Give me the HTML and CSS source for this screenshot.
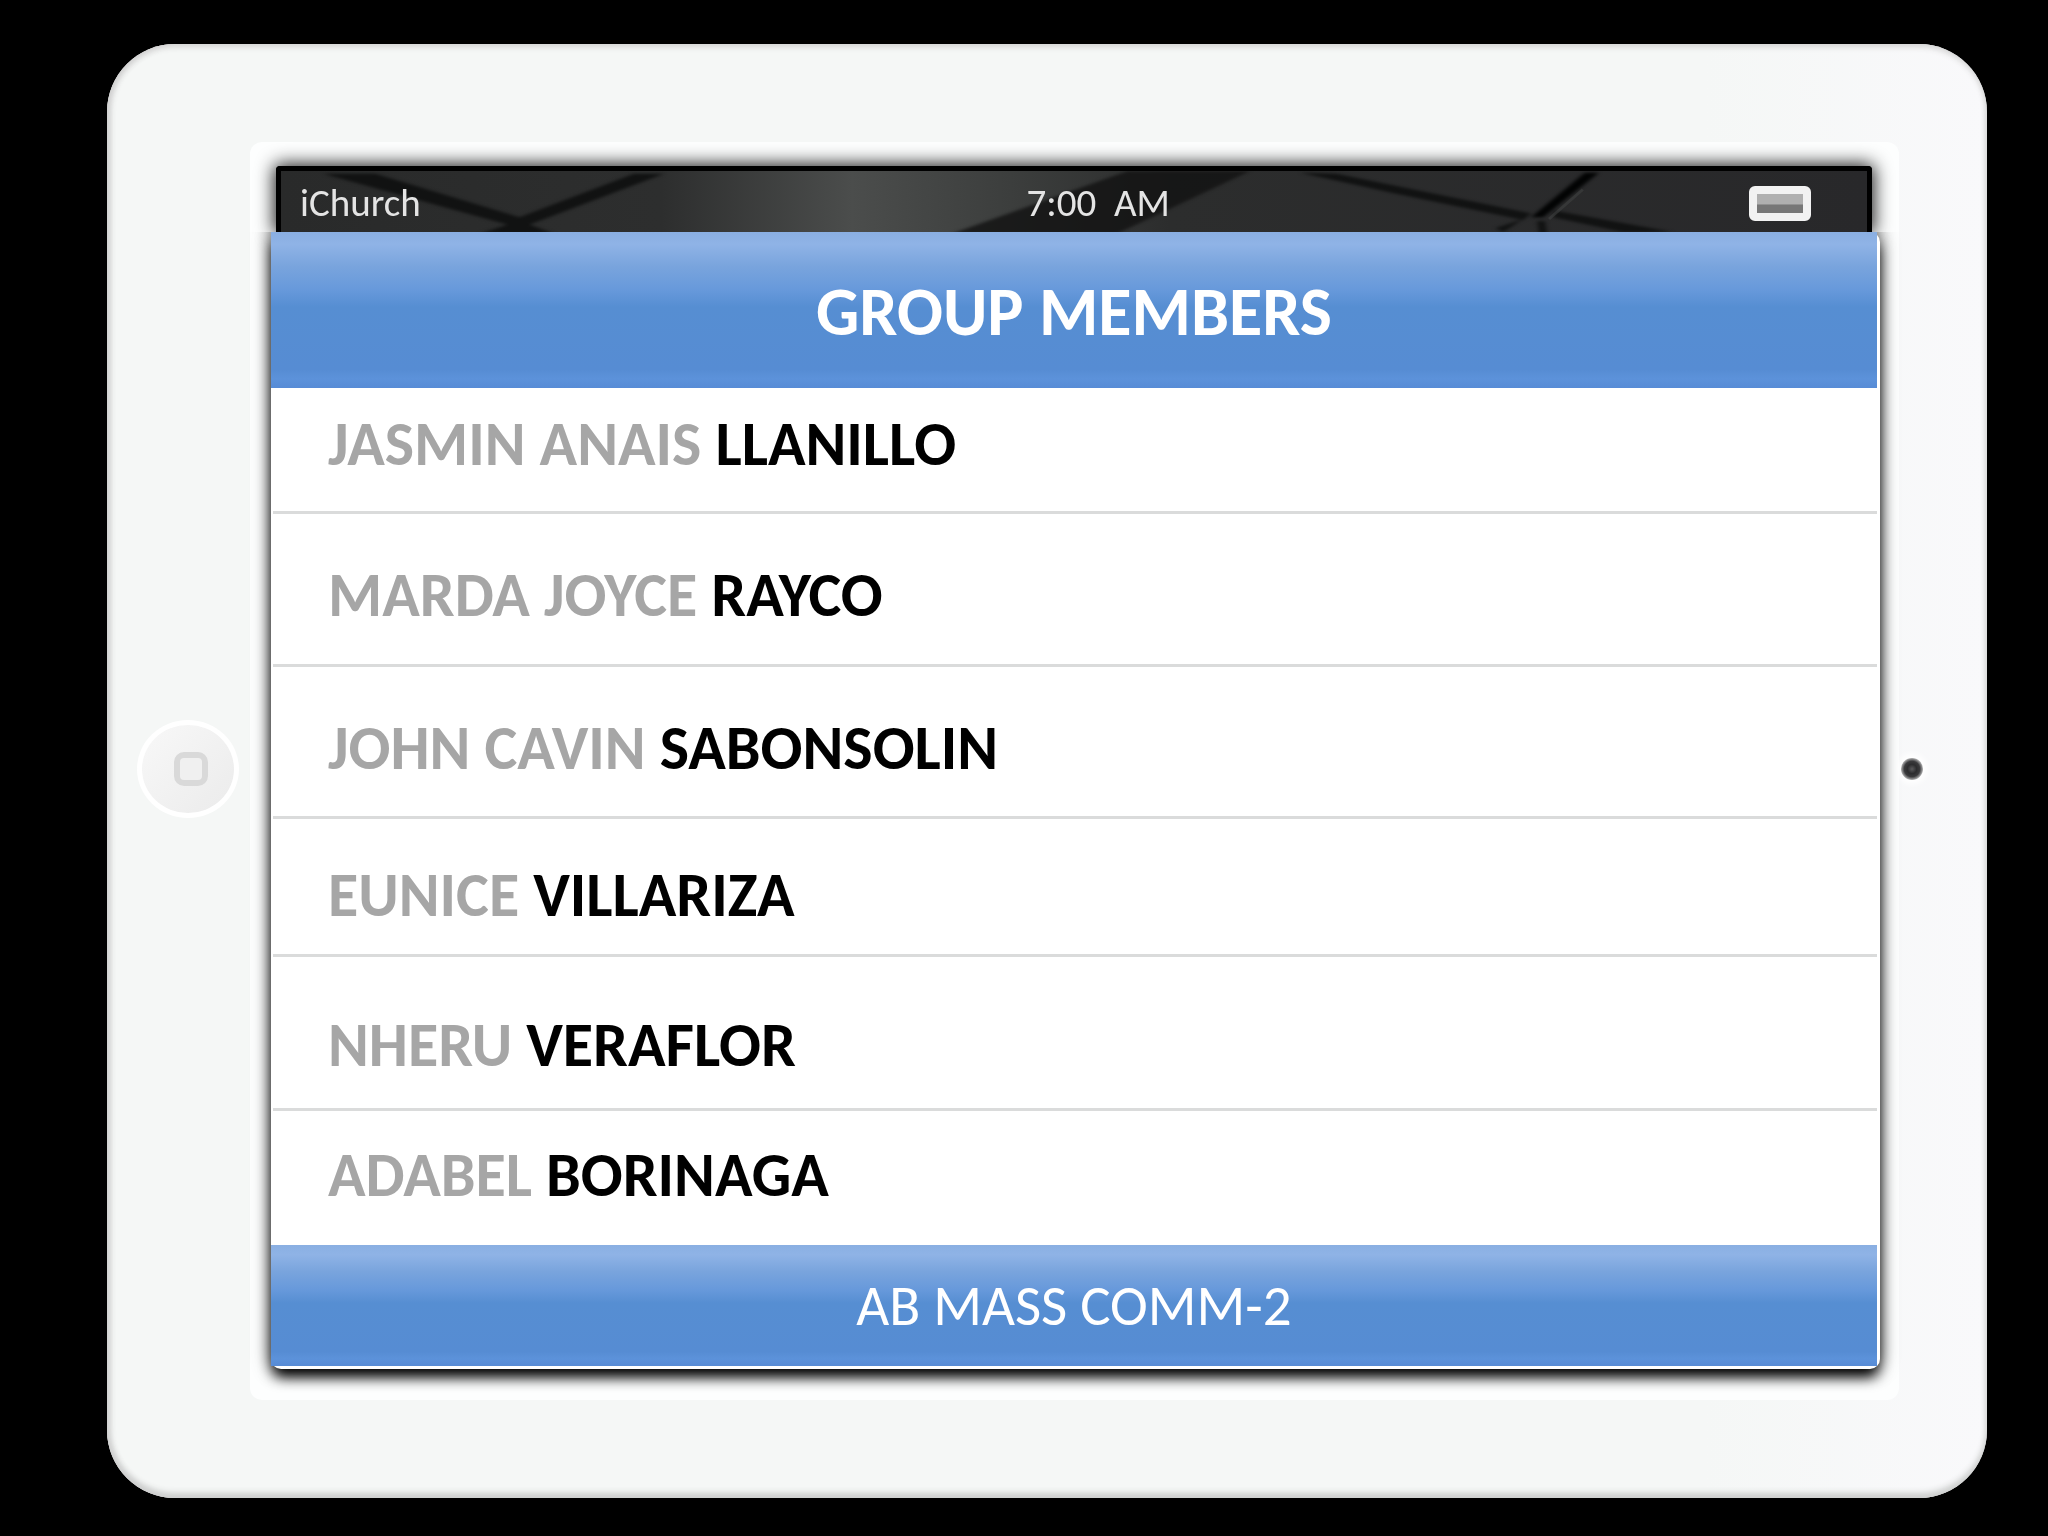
FILE: index.html
```html
<!DOCTYPE html>
<html lang="en">
  <head>
    <meta charset="UTF-8" />
    <title>iChurch - Group Members</title>
    <meta name="viewport" content="width=device-width, initial-scale=1.0" />
    <link rel="stylesheet" href="styles.css">
  </head>

  <body>
    <div class="tablet">
      <div class="side home-side">
        <button class="home-btn" aria-label="Home">
          <svg width="36" height="36" viewBox="0 0 36 36">
            <rect x="4" y="4" width="28" height="28" rx="7" fill="#f0f0f0" stroke="#d9d9d9" stroke-width="6" />
          </svg>
        </button>
      </div>

      <div class="well">
        <div class="status-bar">
          <!-- cracked glass wallpaper behind the status text -->
          <svg class="wallpaper" viewBox="0 0 1596 66" preserveAspectRatio="none" aria-hidden="true">
            <defs>
              <linearGradient id="shine" x1="0" x2="1" y1="0" y2="0">
                <stop offset="0" stop-color="#292a2a" />
                <stop offset="0.24" stop-color="#2d2e2e" />
                <stop offset="0.36" stop-color="#4b4d4c" />
                <stop offset="0.46" stop-color="#3c3e3d" />
                <stop offset="0.56" stop-color="#2c2d2d" />
                <stop offset="1" stop-color="#28282a" />
              </linearGradient>
              <filter id="soft" color-interpolation-filters="sRGB"><feGaussianBlur stdDeviation="2" /></filter>
            </defs>
            <rect width="1596" height="66" fill="url(#shine)" />
            <g filter="url(#soft)" fill="#111212">
              <path d="M43 3 L95 3 L240 50 L355 3 L385 3 L250 58 L275 68 L200 68 L228 58 Z" />
              <path d="M852 0 L975 0 L841 68 L675 68 Z" opacity="0.8" />
              <path d="M1026 2 L1062 3 L1258 46 L1250 53 L1120 24 Z" />
              <path d="M1312 2 L1326 2 L1270 50 L1258 50 Z" fill="#020303" />
              <path d="M1282 43 L1400 66 L1350 66 L1280 50 Z" />
              <path d="M1264 54 L1272 54 L1274 68 L1266 68 Z M1250 52 L1230 66 L1222 62 Z" />
            </g>
            <path d="M1276 52 L1310 20" stroke="#454746" stroke-width="3" opacity="0.5" />
          </svg>
          <span>iChurch</span>
          <span class="time">7:00&nbsp; AM</span>
          <span class="battery"></span>
        </div>

        <div class="app">
          <header>
            <h1>GROUP MEMBERS</h1>
          </header>

          <ul class="members">
            <li><span>JASMIN ANAIS</span> LLANILLO</li>
            <li><span>MARDA JOYCE</span> RAYCO</li>
            <li><span>JOHN CAVIN</span> SABONSOLIN</li>
            <li><span>EUNICE</span> VILLARIZA</li>
            <li><span>NHERU</span> VERAFLOR</li>
            <li><span>ADABEL</span> BORINAGA</li>
          </ul>

          <footer>AB MASS COMM-2</footer>
        </div>
      </div>

      <div class="side camera-side">
        <div class="camera"></div>
      </div>
    </div>
  </body>
</html>
```
FILE: styles.css
```css
* {
  box-sizing: border-box;
  margin: 0;
  padding: 0;
}

body {
  font-family: Carlito, Lato, sans-serif;
  background-color: #000;
  min-height: 100vh;
  display: flex;
  padding: 44px 61px 38px 107px;
  color: #000;
}

.tablet {
  flex: 1;
  display: flex;
  padding: 98px 0;
  border-radius: 68px;
  background: linear-gradient(90deg, #f5f7f6 0%, #f5f7f6 85%, #f9f9fb 100%);
  box-shadow: inset 3px 0 6px #cfcfcf, inset 0 3px 6px #dcdcdc,
    inset 0 -5px 6px #cdcfce;
}

.side {
  display: flex;
  align-items: center;
  padding-bottom: 4px;
}

.home-side {
  width: 143px;
  padding-left: 30px;
}

.home-btn {
  width: 102px;
  height: 98px;
  display: flex;
  align-items: center;
  justify-content: center;
  padding-left: 6px;
  border: 5px solid #fff;
  border-radius: 50%;
  background: linear-gradient(135deg, #f8f8f8, #ebebeb);
  cursor: pointer;
}

.camera-side {
  width: 88px;
  padding-left: 2px;
}

.camera {
  width: 22px;
  height: 22px;
  border-radius: 50%;
  background: radial-gradient(circle, #5a5a5c 0%, #2c2c2e 30%, #3a3a3c 50%, #ccc 75%);
  box-shadow: 0 0 6px 4px #fff;
}

.well {
  flex: 1;
  display: flex;
  flex-direction: column;
  padding: 24px 19px 31px 21px;
  border-radius: 12px;
  background-color: #fdfefe;
}

/* status bar */
.status-bar {
  position: relative;
  height: 66px;
  margin: 0 8px 0 5px;
  padding: 8px 61px 0 24px;
  display: grid;
  grid-template-columns: 17fr auto 15fr;
  align-items: center;
  border-radius: 4px 4px 0 0;
  color: #e4e4e4;
  font-size: 39px;
  line-height: 40px;
  box-shadow: 0 0 18px 2px rgba(0, 0, 0, 0.9);
}

.status-bar span {
  position: relative;
}

.wallpaper {
  position: absolute;
  inset: 0;
  width: 100%;
  height: 100%;
  border: 5px solid #000;
  border-bottom: none;
  border-radius: 4px 4px 0 0;
}

.battery {
  justify-self: end;
  width: 62px;
  height: 35px;
  border: 8px solid #f2f2f2;
  border-radius: 6px;
  background: linear-gradient(#b0b0b0 50%, #777 60%);
}

/* app */
.app {
  position: relative;
  flex: 1;
  display: flex;
  flex-direction: column;
  padding: 0 3px 3px 0;
  border-radius: 0 10px 10px 10px;
  background-color: #fff;
  box-shadow: 0 0 18px rgba(0, 0, 0, 0.7), 0 10px 14px -2px #000;
  clip-path: inset(0 -30px -40px -30px);
}

header,
footer {
  display: flex;
  align-items: center;
  justify-content: center;
  color: #fff;
  background: linear-gradient(
    #8aafe2 0%,
    #8fb3e6 8%,
    #79a4dd 22%,
    #6799db 37%,
    #568ed2 48%,
    #568cd3 88%,
    #5c92da 94%,
    #578bd6 100%
  );
}

header {
  height: 156px;
  padding-top: 4px;
}

header h1 {
  font-size: 68px;
  line-height: 72px;
  font-weight: 700;
}

footer {
  height: 121px;
  font-size: 57px;
  line-height: 72px;
}

.members {
  flex: 1;
  display: grid;
  grid-template-rows: 126fr 153fr 151fr 138fr 154fr 134fr;
  list-style: none;
}

.members li {
  padding: 45px 55px 0;
  margin-left: 2px;
  border-bottom: 3px solid #dadbdb;
  font-size: 62px;
  line-height: 72px;
  font-weight: 700;
}

.members li:first-child {
  padding-top: 20px;
}

.members li:nth-child(4) {
  padding-top: 40px;
}

.members li:nth-child(5) {
  padding-top: 52px;
}

.members li:last-child {
  padding-top: 28px;
  border-bottom: none;
}

.members span {
  color: #a6a6a6;
}
```
